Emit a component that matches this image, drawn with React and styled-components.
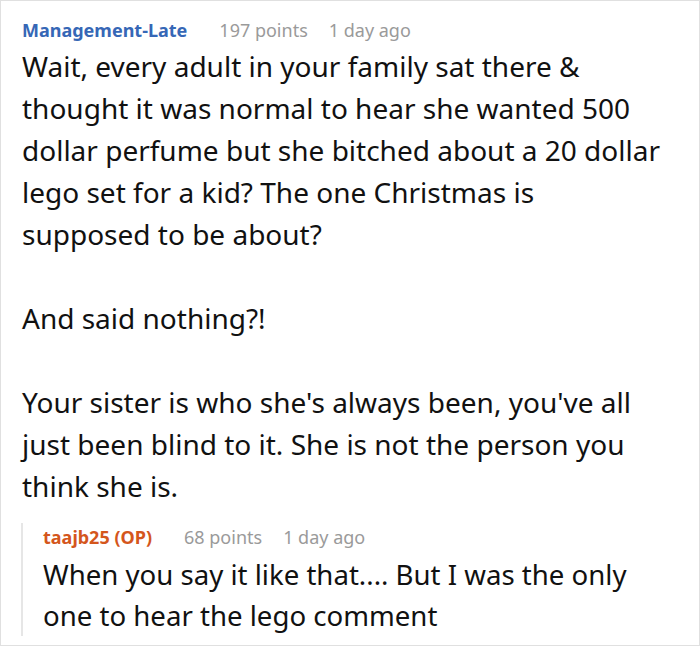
import React from "react";
import styled, { createGlobalStyle } from "styled-components";

const GlobalStyle = createGlobalStyle`
  html, body {
    margin: 0;
    padding: 0;
    background: #ffffff;
  }
  body {
    font-family: "Noto Sans", "Open Sans", sans-serif;
  }
`;

const Card = styled.div`
  box-sizing: border-box;
  width: 700px;
  height: 646px;
  border: 1px solid #e0e0e0;
  padding: 15px 20px 0 21px;
  overflow: hidden;
  color: #111111;
`;

const Meta = styled.div`
  display: flex;
  align-items: baseline;
  font-size: 18px;
  line-height: 28px;
  white-space: nowrap;
  margin-top: ${({ $reply }) => ($reply ? "-7px" : "0")};
`;

const Author = styled.span`
  font-weight: 700;
  color: ${({ $op }) => ($op ? "#d4561c" : "#3667b6")};
  margin-right: 32px;
`;

const Points = styled.span`
  color: #9a9a9a;
  margin-right: 21px;
`;

const Time = styled.span`
  color: #9a9a9a;
`;

const Body = styled.div`
  font-size: 28px;
  line-height: 42px;
  margin-top: 1px;
`;

const Para = styled.p`
  margin: 0 0 42px 0;
  &:last-child {
    margin-bottom: 0;
  }
`;

const Reply = styled.div`
  margin-top: 23px;
  margin-left: -1px;
  padding-left: 20px;
  border-left: 2px solid #e6e6e6;
`;

const ReplyBody = styled.div`
  font-size: 27.6px;
  line-height: 41px;
  margin-top: 3px;
  margin-bottom: -10px;
`;

const Comment = ({ author, points, time, op, reply, children }) => (
  <>
    <Meta $reply={reply}>
      <Author $op={op}>{author}</Author>
      <Points>{points} points</Points>
      <Time>{time}</Time>
    </Meta>
    {children}
  </>
);

export default function App() {
  return (
    <>
      <GlobalStyle />
      <Card>
        <Comment author="Management-Late" points={197} time="1 day ago">
          <Body>
            <Para>
              Wait, every adult in your family sat there &amp;
              <br />
              thought it was normal to hear she wanted 500
              <br />
              dollar perfume but she bitched about a 20 dollar
              <br />
              lego set for a kid? The one Christmas is
              <br />
              supposed to be about?
            </Para>
            <Para>And said nothing?!</Para>
            <Para>
              Your sister is who she's always been, you've all
              <br />
              just been blind to it. She is not the person you
              <br />
              think she is.
            </Para>
          </Body>
        </Comment>
        <Reply>
          <Comment author="taajb25 (OP)" points={68} time="1 day ago" op reply>
            <ReplyBody>
              When you say it like that.... But I was the only
              <br />
              one to hear the lego comment
            </ReplyBody>
          </Comment>
        </Reply>
      </Card>
    </>
  );
}
